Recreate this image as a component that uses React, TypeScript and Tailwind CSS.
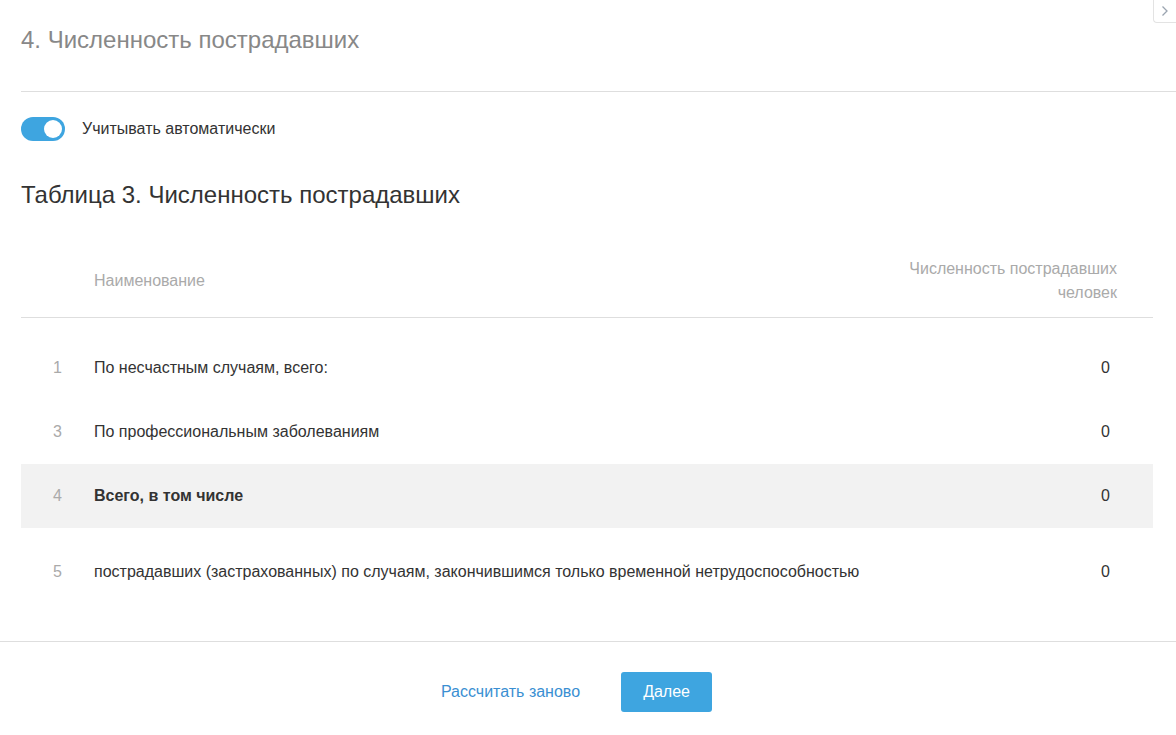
const rows = [
  { n: 1, name: "По несчастным случаям, всего:", value: 0 },
  { n: 3, name: "По профессиональным заболеваниям", value: 0 },
  { n: 4, name: "Всего, в том числе", value: 0, total: true },
];

export default function App() {
  return (
    <div className="relative h-[735px] w-full bg-white font-['Liberation_Sans',Arial,sans-serif] text-[#333]">
      {/* collapse handle */}
      <div className="absolute right-0 top-0 flex h-[23px] w-[23px] items-center justify-center rounded-bl-[4px] border-b border-l border-[#e3e3e3] bg-white">
        <svg width="8" height="12" viewBox="0 0 8 12" fill="none">
          <path d="M1.5 1.5 6 6l-4.5 4.5" stroke="#9aa4b0" strokeWidth="1.3" />
        </svg>
      </div>

      <div className="ml-[21px] flex h-[92px] items-center border-b border-[#dedede] pb-[12px]">
        <h2 className="text-[24px] font-normal text-[#888]">4. Численность пострадавших</h2>
      </div>

      <div className="mx-[21px] mt-[25px] flex items-center gap-[17px]">
        <div className="relative h-[24px] w-[44px] rounded-full bg-[#3ea5e0]">
          <div className="absolute right-[3px] top-[3px] h-[18px] w-[18px] rounded-full bg-white" />
        </div>
        <span className="text-[16px]">Учитывать автоматически</span>
      </div>

      <h3 className="mx-[21px] mt-[39px] text-[24px] font-normal leading-[30px]">
        Таблица 3. Численность пострадавших
      </h3>

      <div className="mx-[21px] mt-[47px] w-[1132px]">
        <div className="flex items-center border-b border-[#dedede] pb-[12px] text-[16px] text-[#aaa]">
          <div className="w-[73px]" />
          <div className="flex-1">Наименование</div>
          <div className="pr-[36px] text-right leading-[24px]">
            Численность пострадавших
            <br />
            человек
          </div>
        </div>

        <div className="pt-[18px]">
          {rows.map((r) => (
            <div
              key={r.n}
              className={`flex h-[64px] items-center text-[16px] ${r.total ? "bg-[#f2f2f2] font-bold" : ""}`}
            >
              <div className="w-[73px] text-center font-normal text-[#aaa]">{r.n}</div>
              <div className="flex-1">{r.name}</div>
              <div className="pr-[43px] font-normal">{r.value}</div>
            </div>
          ))}
          <div className="mt-[12px] flex h-[64px] items-center text-[16px]">
            <div className="w-[73px] text-center text-[#aaa]">5</div>
            <div className="flex-1">
              пострадавших (застрахованных) по случаям, закончившимся только временной нетрудоспособностью
            </div>
            <div className="pr-[43px]">0</div>
          </div>
        </div>
      </div>

      <div className="mt-[37px] flex items-center justify-center gap-[41px] border-t border-[#dedede] pr-[23px] pt-[30px]">
        <a className="cursor-pointer text-[16px] text-[#3a8fd2]">Рассчитать заново</a>
        <button className="h-[40px] w-[91px] rounded-[3px] bg-[#3ea5e0] text-[16px] text-white">Далее</button>
      </div>
    </div>
  );
}
